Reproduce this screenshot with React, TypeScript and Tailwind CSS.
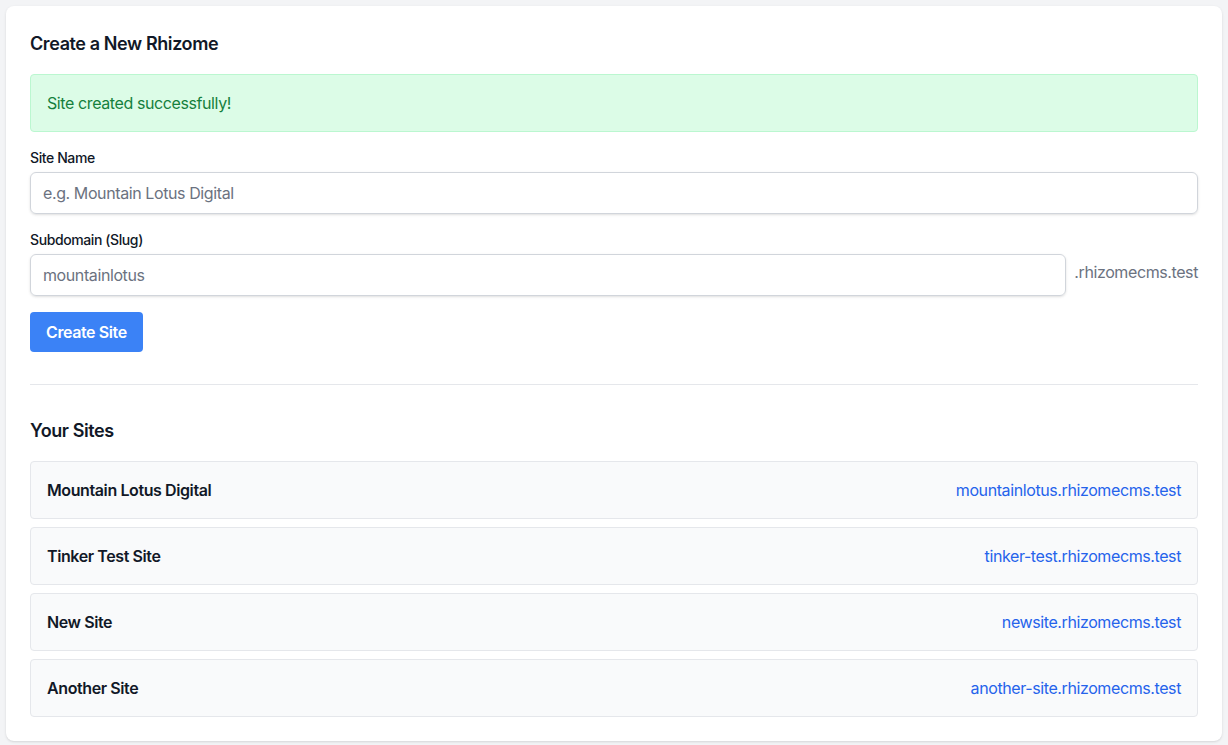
import React from 'react';

type Site = {
  name: string;
  domain: string;
};

const sites: Site[] = [
  { name: 'Mountain Lotus Digital', domain: 'mountainlotus.rhizomecms.test' },
  { name: 'Tinker Test Site', domain: 'tinker-test.rhizomecms.test' },
  { name: 'New Site', domain: 'newsite.rhizomecms.test' },
  { name: 'Another Site', domain: 'another-site.rhizomecms.test' },
];

function App() {
  return (
    <div
      className="min-h-screen bg-[#f3f4f6] p-1.5 tracking-tight"
      style={{ fontFamily: "Inter, 'Noto Sans', sans-serif" }}
    >
      <div className="bg-white rounded-lg shadow-sm p-6">
        {/* Create form */}
        <h2 className="text-lg font-semibold text-[#111827] mb-4">Create a New Rhizome</h2>

        <div className="bg-[#dcfce7] border border-[#bbf7d0] text-[#15803d] rounded p-4 mb-4">
          Site created successfully!
        </div>

        <div className="mb-4">
          <label className="block text-sm font-medium text-[#111827] mb-1">Site Name</label>
          <input
            type="text"
            placeholder="e.g. Mountain Lotus Digital"
            className="w-full border border-[#d1d5db] rounded-md px-3 py-2 shadow-sm placeholder:text-[#6b7280] outline-none"
          />
        </div>

        <div className="mb-4">
          <label className="block text-sm font-medium text-[#111827] mb-1">Subdomain (Slug)</label>
          <div className="flex items-center gap-2">
            <input
              type="text"
              placeholder="mountainlotus"
              className="flex-1 min-w-0 border border-[#d1d5db] rounded-md px-3 py-2 shadow-sm placeholder:text-[#6b7280] outline-none"
            />
            <span className="text-[#6b7280] -mt-1.5">.rhizomecms.test</span>
          </div>
        </div>

        <button className="bg-[#3b82f6] text-white font-semibold px-4 py-2 rounded">
          Create Site
        </button>

        <hr className="my-8 border-[#e5e7eb]" />

        {/* Site list */}
        <h2 className="text-lg font-semibold text-[#111827] mb-4">Your Sites</h2>
        <ul className="flex flex-col gap-2">
          {sites.map(site => (
            <li
              key={site.domain}
              className="flex justify-between items-center bg-[#f9fafb] border border-[#e5e7eb] rounded p-4"
            >
              <span className="font-semibold text-[#111827]">{site.name}</span>
              <a href="#" className="text-[#2563eb]">{site.domain}</a>
            </li>
          ))}
        </ul>
      </div>
    </div>
  );
}

export default App;
